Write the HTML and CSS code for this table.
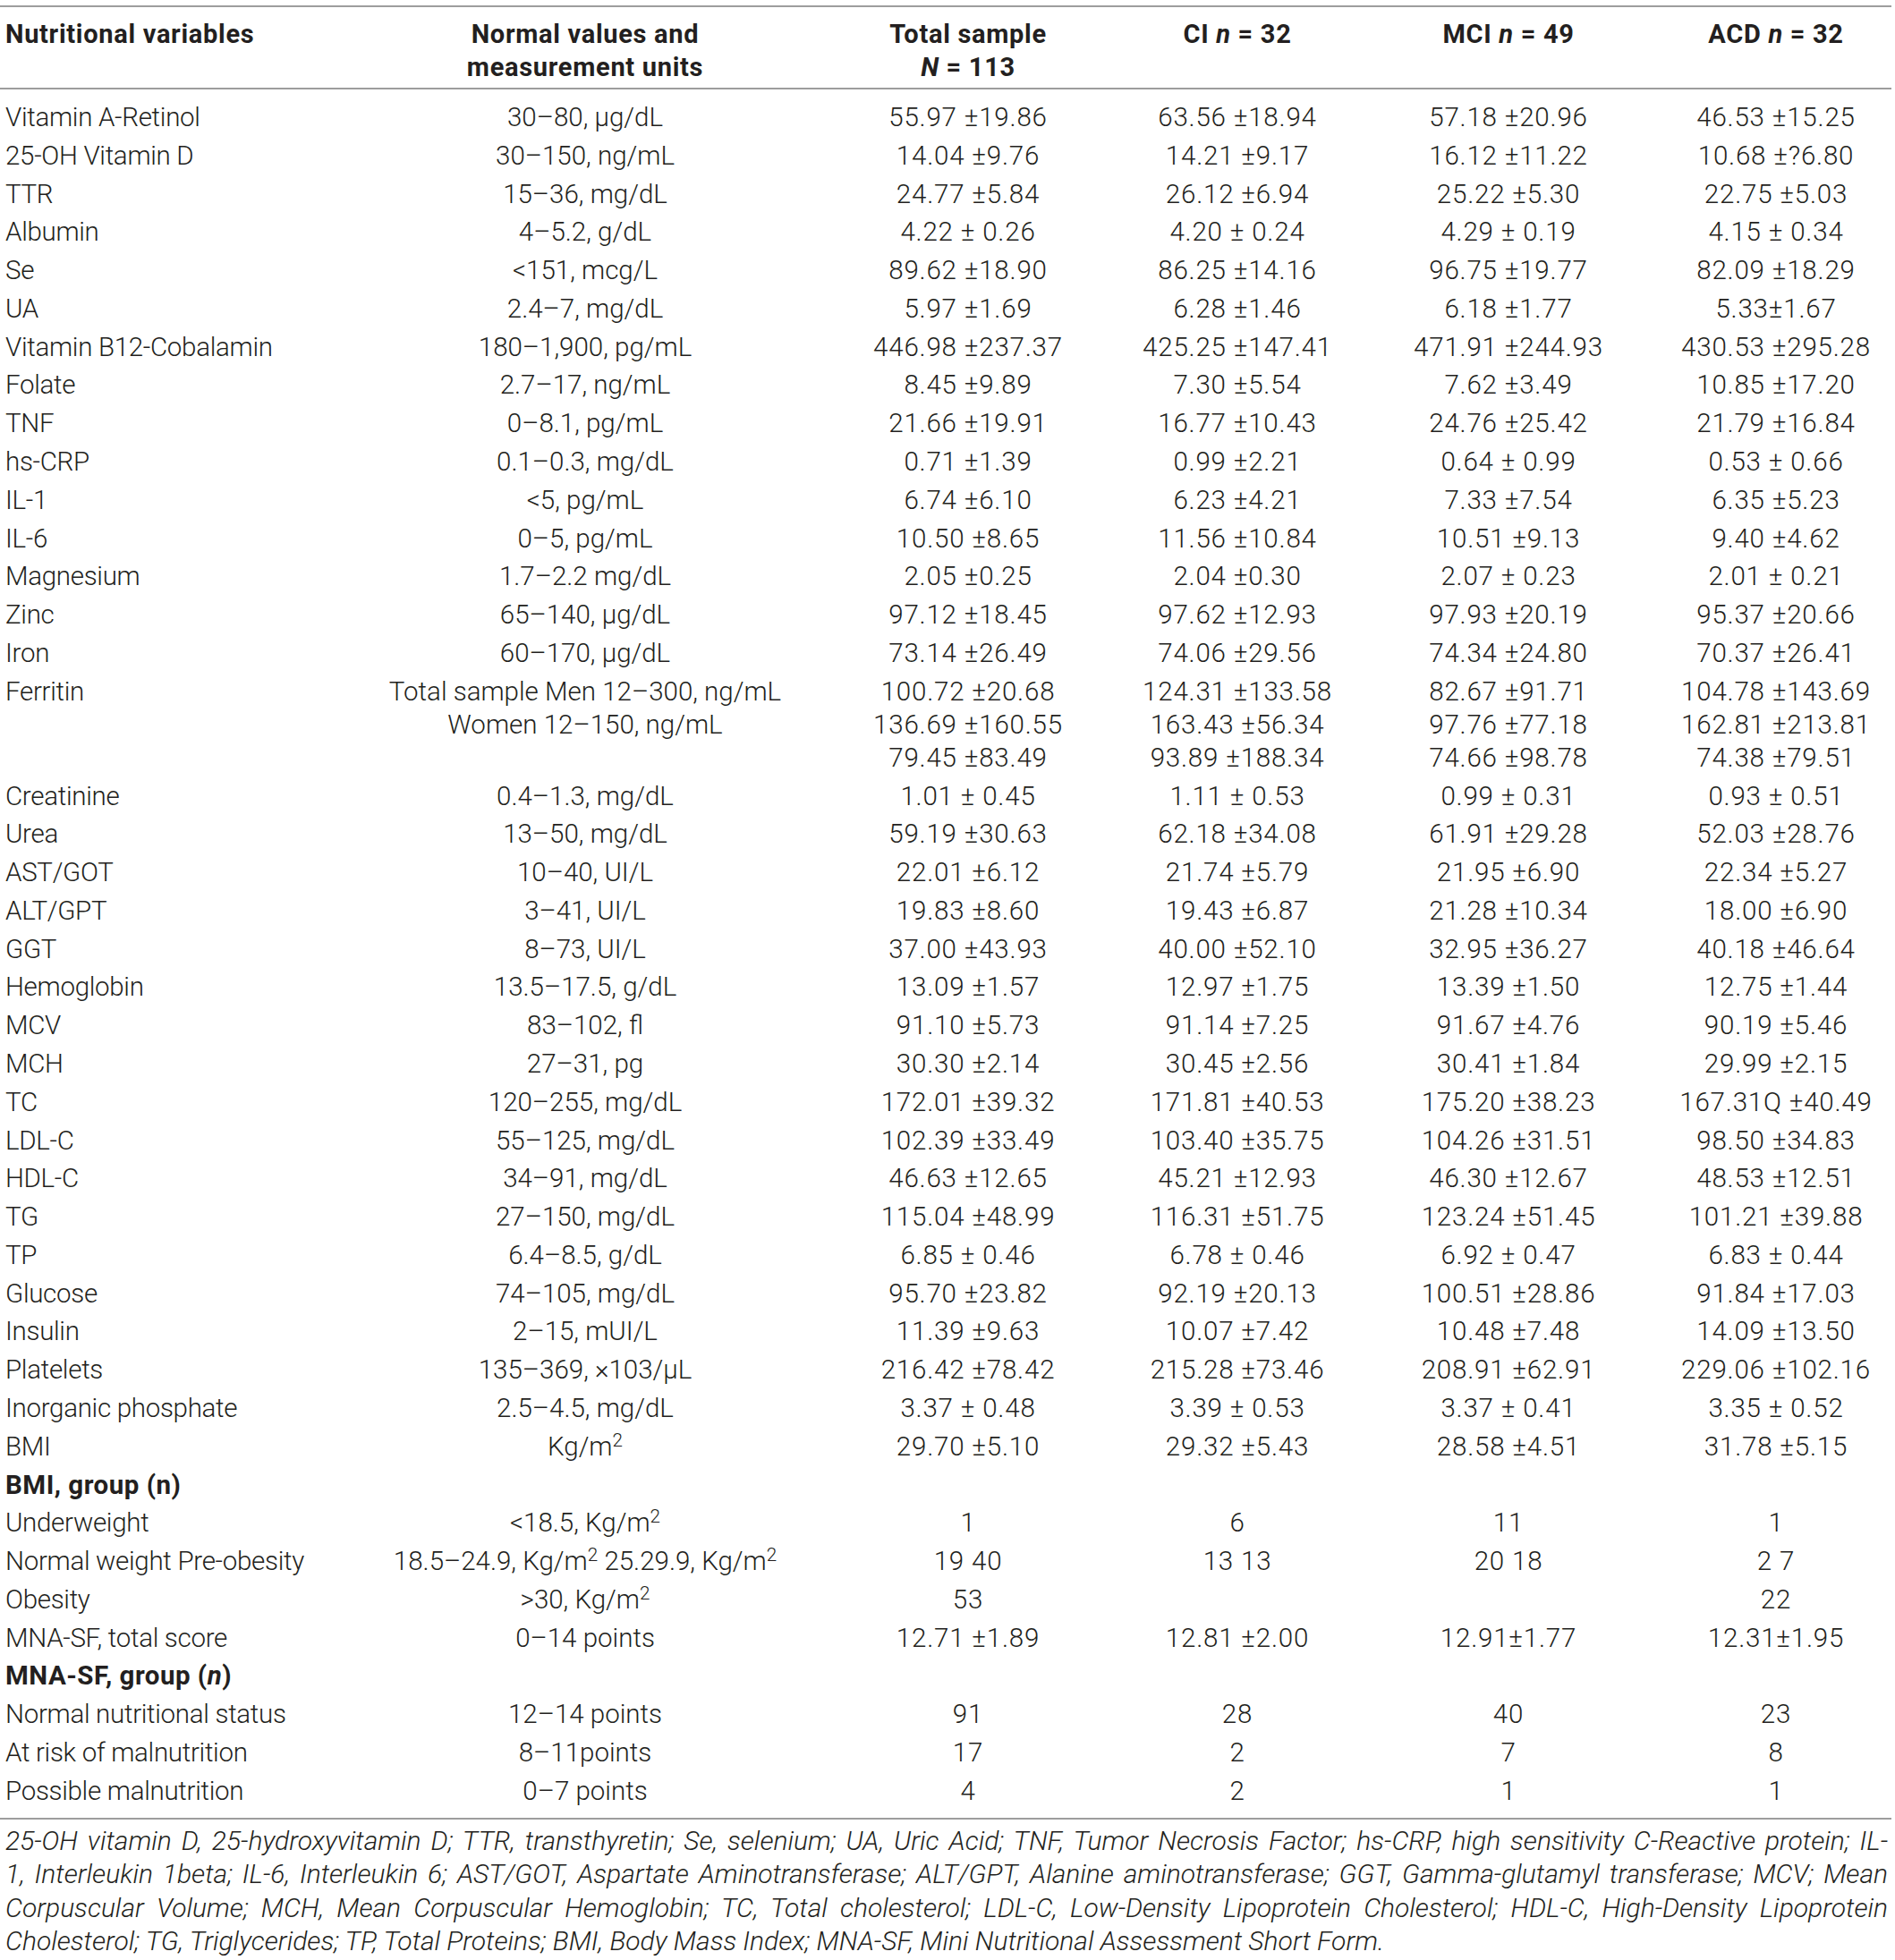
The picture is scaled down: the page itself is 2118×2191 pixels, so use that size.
FILE: index.html
```html
<!DOCTYPE html>
<html lang="en">
<head>
<meta charset="utf-8">
<title>Nutritional variables</title>
<link rel="stylesheet" href="styles.css">
</head>
<body>
<div class="page">
<table class="data">
<colgroup>
<col class="c1"><col class="c2"><col class="c3"><col class="c4"><col class="c5"><col class="c6">
</colgroup>
<thead>
<tr>
<th class="left">Nutritional variables</th>
<th>Normal values and<br>measurement units</th>
<th>Total sample<br><i>N</i> = 113</th>
<th>CI <i>n</i> = 32</th>
<th>MCI <i>n</i> = 49</th>
<th>ACD <i>n</i> = 32</th>
</tr>
</thead>
<tbody>
<tr class="first"><td class="left">Vitamin A-Retinol</td><td class="unit">30–80, µg/dL</td><td>55.97 ±19.86</td><td>63.56 ±18.94</td><td>57.18 ±20.96</td><td>46.53 ±15.25</td></tr>
<tr><td class="left">25-OH Vitamin D</td><td class="unit">30–150, ng/mL</td><td>14.04 ±9.76</td><td>14.21 ±9.17</td><td>16.12 ±11.22</td><td>10.68 ±?6.80</td></tr>
<tr><td class="left">TTR</td><td class="unit">15–36, mg/dL</td><td>24.77 ±5.84</td><td>26.12 ±6.94</td><td>25.22 ±5.30</td><td>22.75 ±5.03</td></tr>
<tr><td class="left">Albumin</td><td class="unit">4–5.2, g/dL</td><td>4.22 ± 0.26</td><td>4.20 ± 0.24</td><td>4.29 ± 0.19</td><td>4.15 ± 0.34</td></tr>
<tr><td class="left">Se</td><td class="unit">&lt;151, mcg/L</td><td>89.62 ±18.90</td><td>86.25 ±14.16</td><td>96.75 ±19.77</td><td>82.09 ±18.29</td></tr>
<tr><td class="left">UA</td><td class="unit">2.4–7, mg/dL</td><td>5.97 ±1.69</td><td>6.28 ±1.46</td><td>6.18 ±1.77</td><td>5.33±1.67</td></tr>
<tr><td class="left">Vitamin B12-Cobalamin</td><td class="unit">180–1,900, pg/mL</td><td>446.98 ±237.37</td><td>425.25 ±147.41</td><td>471.91 ±244.93</td><td>430.53 ±295.28</td></tr>
<tr><td class="left">Folate</td><td class="unit">2.7–17, ng/mL</td><td>8.45 ±9.89</td><td>7.30 ±5.54</td><td>7.62 ±3.49</td><td>10.85 ±17.20</td></tr>
<tr><td class="left">TNF</td><td class="unit">0–8.1, pg/mL</td><td>21.66 ±19.91</td><td>16.77 ±10.43</td><td>24.76 ±25.42</td><td>21.79 ±16.84</td></tr>
<tr><td class="left">hs-CRP</td><td class="unit">0.1–0.3, mg/dL</td><td>0.71 ±1.39</td><td>0.99 ±2.21</td><td>0.64 ± 0.99</td><td>0.53 ± 0.66</td></tr>
<tr><td class="left">IL-1</td><td class="unit">&lt;5, pg/mL</td><td>6.74 ±6.10</td><td>6.23 ±4.21</td><td>7.33 ±7.54</td><td>6.35 ±5.23</td></tr>
<tr><td class="left">IL-6</td><td class="unit">0–5, pg/mL</td><td>10.50 ±8.65</td><td>11.56 ±10.84</td><td>10.51 ±9.13</td><td>9.40 ±4.62</td></tr>
<tr><td class="left">Magnesium</td><td class="unit">1.7–2.2 mg/dL</td><td>2.05 ±0.25</td><td>2.04 ±0.30</td><td>2.07 ± 0.23</td><td>2.01 ± 0.21</td></tr>
<tr><td class="left">Zinc</td><td class="unit">65–140, µg/dL</td><td>97.12 ±18.45</td><td>97.62 ±12.93</td><td>97.93 ±20.19</td><td>95.37 ±20.66</td></tr>
<tr><td class="left">Iron</td><td class="unit">60–170, µg/dL</td><td>73.14 ±26.49</td><td>74.06 ±29.56</td><td>74.34 ±24.80</td><td>70.37 ±26.41</td></tr>
<tr><td class="left">Ferritin</td><td class="unit">Total sample Men 12–300, ng/mL<br>Women 12–150, ng/mL</td><td>100.72 ±20.68<br>136.69 ±160.55<br>79.45 ±83.49</td><td>124.31 ±133.58<br>163.43 ±56.34<br>93.89 ±188.34</td><td>82.67 ±91.71<br>97.76 ±77.18<br>74.66 ±98.78</td><td>104.78 ±143.69<br>162.81 ±213.81<br>74.38 ±79.51</td></tr>
<tr><td class="left">Creatinine</td><td class="unit">0.4–1.3, mg/dL</td><td>1.01 ± 0.45</td><td>1.11 ± 0.53</td><td>0.99 ± 0.31</td><td>0.93 ± 0.51</td></tr>
<tr><td class="left">Urea</td><td class="unit">13–50, mg/dL</td><td>59.19 ±30.63</td><td>62.18 ±34.08</td><td>61.91 ±29.28</td><td>52.03 ±28.76</td></tr>
<tr><td class="left">AST/GOT</td><td class="unit">10–40, UI/L</td><td>22.01 ±6.12</td><td>21.74 ±5.79</td><td>21.95 ±6.90</td><td>22.34 ±5.27</td></tr>
<tr><td class="left">ALT/GPT</td><td class="unit">3–41, UI/L</td><td>19.83 ±8.60</td><td>19.43 ±6.87</td><td>21.28 ±10.34</td><td>18.00 ±6.90</td></tr>
<tr><td class="left">GGT</td><td class="unit">8–73, UI/L</td><td>37.00 ±43.93</td><td>40.00 ±52.10</td><td>32.95 ±36.27</td><td>40.18 ±46.64</td></tr>
<tr><td class="left">Hemoglobin</td><td class="unit">13.5–17.5, g/dL</td><td>13.09 ±1.57</td><td>12.97 ±1.75</td><td>13.39 ±1.50</td><td>12.75 ±1.44</td></tr>
<tr><td class="left">MCV</td><td class="unit">83–102, fl</td><td>91.10 ±5.73</td><td>91.14 ±7.25</td><td>91.67 ±4.76</td><td>90.19 ±5.46</td></tr>
<tr><td class="left">MCH</td><td class="unit">27–31, pg</td><td>30.30 ±2.14</td><td>30.45 ±2.56</td><td>30.41 ±1.84</td><td>29.99 ±2.15</td></tr>
<tr><td class="left">TC</td><td class="unit">120–255, mg/dL</td><td>172.01 ±39.32</td><td>171.81 ±40.53</td><td>175.20 ±38.23</td><td>167.31Q ±40.49</td></tr>
<tr><td class="left">LDL-C</td><td class="unit">55–125, mg/dL</td><td>102.39 ±33.49</td><td>103.40 ±35.75</td><td>104.26 ±31.51</td><td>98.50 ±34.83</td></tr>
<tr><td class="left">HDL-C</td><td class="unit">34–91, mg/dL</td><td>46.63 ±12.65</td><td>45.21 ±12.93</td><td>46.30 ±12.67</td><td>48.53 ±12.51</td></tr>
<tr><td class="left">TG</td><td class="unit">27–150, mg/dL</td><td>115.04 ±48.99</td><td>116.31 ±51.75</td><td>123.24 ±51.45</td><td>101.21 ±39.88</td></tr>
<tr><td class="left">TP</td><td class="unit">6.4–8.5, g/dL</td><td>6.85 ± 0.46</td><td>6.78 ± 0.46</td><td>6.92 ± 0.47</td><td>6.83 ± 0.44</td></tr>
<tr><td class="left">Glucose</td><td class="unit">74–105, mg/dL</td><td>95.70 ±23.82</td><td>92.19 ±20.13</td><td>100.51 ±28.86</td><td>91.84 ±17.03</td></tr>
<tr><td class="left">Insulin</td><td class="unit">2–15, mUI/L</td><td>11.39 ±9.63</td><td>10.07 ±7.42</td><td>10.48 ±7.48</td><td>14.09 ±13.50</td></tr>
<tr><td class="left">Platelets</td><td class="unit">135–369, ×103/µL</td><td>216.42 ±78.42</td><td>215.28 ±73.46</td><td>208.91 ±62.91</td><td>229.06 ±102.16</td></tr>
<tr><td class="left">Inorganic phosphate</td><td class="unit">2.5–4.5, mg/dL</td><td>3.37 ± 0.48</td><td>3.39 ± 0.53</td><td>3.37 ± 0.41</td><td>3.35 ± 0.52</td></tr>
<tr><td class="left">BMI</td><td class="unit">Kg/m<sup>2</sup></td><td>29.70 ±5.10</td><td>29.32 ±5.43</td><td>28.58 ±4.51</td><td>31.78 ±5.15</td></tr>
<tr class="group"><td class="left">BMI, group (n)</td><td></td><td></td><td></td><td></td><td></td></tr>
<tr><td class="left">Underweight</td><td class="unit">&lt;18.5, Kg/m<sup>2</sup></td><td>1</td><td>6</td><td>11</td><td>1</td></tr>
<tr><td class="left">Normal weight Pre-obesity</td><td class="unit">18.5–24.9, Kg/m<sup>2</sup> 25.29.9, Kg/m<sup>2</sup></td><td>19 40</td><td>13 13</td><td>20 18</td><td>2 7</td></tr>
<tr><td class="left">Obesity</td><td class="unit">&gt;30, Kg/m<sup>2</sup></td><td>53</td><td></td><td></td><td>22</td></tr>
<tr><td class="left">MNA-SF, total score</td><td class="unit">0–14 points</td><td>12.71 ±1.89</td><td>12.81 ±2.00</td><td>12.91±1.77</td><td>12.31±1.95</td></tr>
<tr class="group"><td class="left">MNA-SF, group (<i>n</i>)</td><td></td><td></td><td></td><td></td><td></td></tr>
<tr><td class="left">Normal nutritional status</td><td class="unit">12–14 points</td><td>91</td><td>28</td><td>40</td><td>23</td></tr>
<tr><td class="left">At risk of malnutrition</td><td class="unit">8–11points</td><td>17</td><td>2</td><td>7</td><td>8</td></tr>
<tr class="last"><td class="left">Possible malnutrition</td><td class="unit">0–7 points</td><td>4</td><td>2</td><td>1</td><td>1</td></tr>
</tbody>
</table>
<div class="notes">
<span class="line">25-OH vitamin D, 25-hydroxyvitamin D; TTR, transthyretin; Se, selenium; UA, Uric Acid; TNF, Tumor Necrosis Factor; hs-CRP, high sensitivity C-Reactive protein; IL-</span>
<span class="line">1, Interleukin 1beta; IL-6, Interleukin 6; AST/GOT, Aspartate Aminotransferase; ALT/GPT, Alanine aminotransferase; GGT, Gamma-glutamyl transferase; MCV; Mean</span>
<span class="line">Corpuscular Volume; MCH, Mean Corpuscular Hemoglobin; TC, Total cholesterol; LDL-C, Low-Density Lipoprotein Cholesterol; HDL-C, High-Density Lipoprotein</span>
<span class="line end">Cholesterol; TG, Triglycerides; TP, Total Proteins; BMI, Body Mass Index; MNA-SF, Mini Nutritional Assessment Short Form.</span>
</div>
</div>
</body>
</html>
```

FILE: styles.css
```css
html, body {
  margin: 0;
  padding: 0;
  background: #ffffff;
}

.page {
  width: 2114px;
  padding-top: 6px;
  font-family: Roboto, "Liberation Sans", Arial, sans-serif;
  font-weight: 300;
  font-size: 29.5px;
  color: #231f20;
}

.data {
  width: 2114px;
  table-layout: fixed;
  border-collapse: collapse;
}

.c1 { width: 394px; }
.c2 { width: 520px; }
.c3 { width: 336px; }
.c4 { width: 266px; }
.c5 { width: 340px; }
.c6 { width: 258px; }

.data thead tr {
  border-top: 2px solid #9d9d9d;
  border-bottom: 2px solid #9d9d9d;
}

.data th {
  font-weight: 700;
  font-size: 29px;
  letter-spacing: 0.7px;
  line-height: 37px;
  padding: 12px 0 4px;
  text-align: center;
  vertical-align: top;
}

.data td {
  line-height: 37px;
  padding: 2.9px 0;
  text-align: center;
  vertical-align: top;
  white-space: nowrap;
  letter-spacing: 0.8px;
}

.data td.unit {
  letter-spacing: 0;
}

.data th.left,
.data td.left {
  text-align: left;
  padding-left: 6px;
}

.data td.left {
  letter-spacing: -0.3px;
}

.data tr.first td { padding-top: 13px; }
.data tr.last td { padding-bottom: 11px; }
.data tbody tr.last { border-bottom: 2px solid #9d9d9d; }

.data tr.group td {
  font-weight: 700;
  letter-spacing: 0.5px;
}

.data sup {
  font-size: 0.7em;
  line-height: 0;
  vertical-align: 0.5em;
  letter-spacing: 0;
}

.notes {
  padding-top: 5px;
  padding-left: 6px;
  width: 2104px;
  font-style: italic;
  font-size: 30px;
  line-height: 37.5px;
}

.notes .line {
  display: block;
  text-align: justify;
  text-align-last: justify;
}

.notes .line.end {
  text-align-last: left;
}
```
